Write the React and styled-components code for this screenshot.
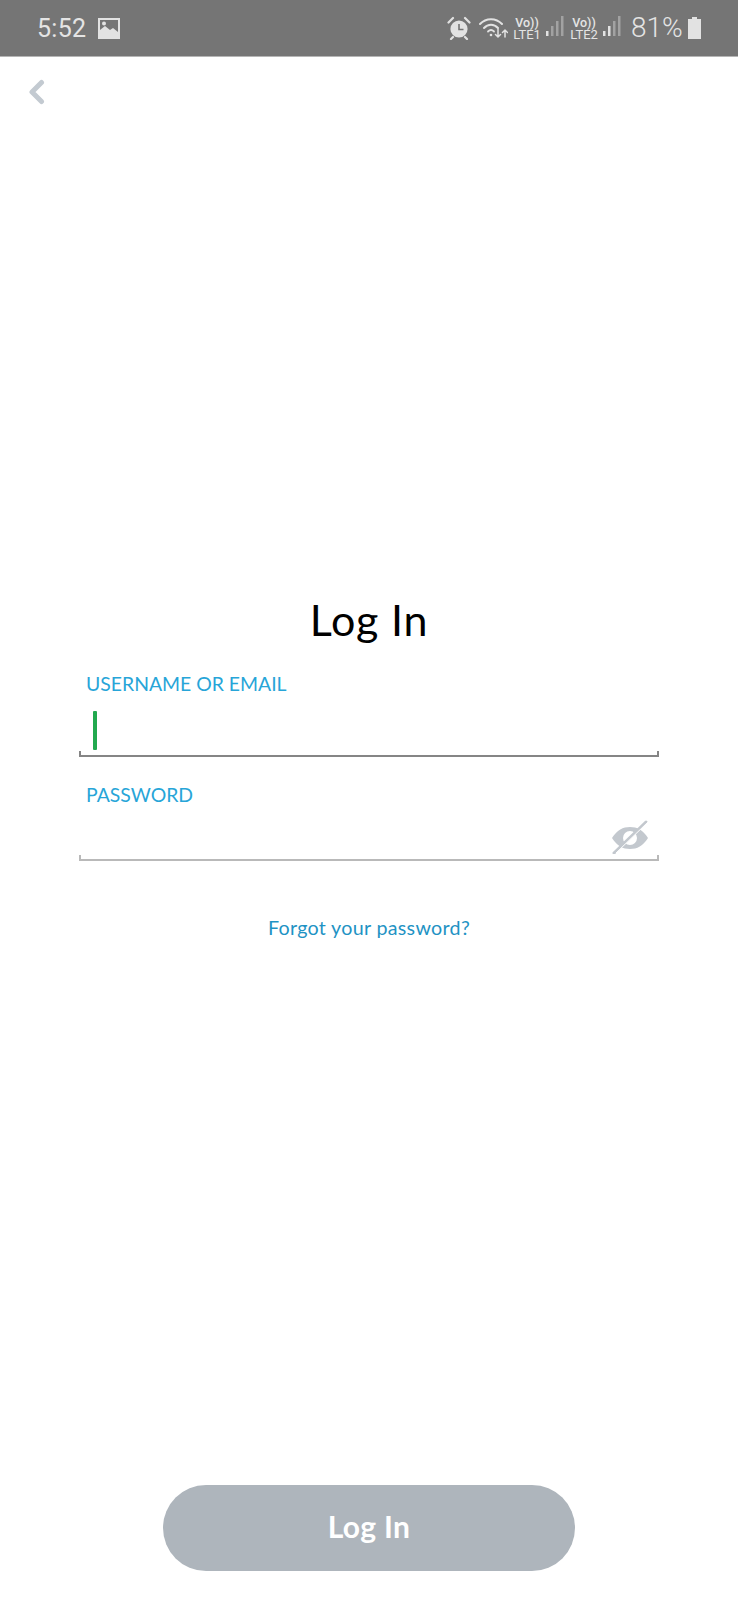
import React from "react";
import styled, { createGlobalStyle } from "styled-components";

const Global = createGlobalStyle`
  html, body { margin: 0; padding: 0; background: #fff; }
  #root { width: 738px; height: 1600px; }
  * { box-sizing: border-box; }
`;

const Page = styled.div`
  width: 738px; height: 1600px; display: flex; flex-direction: column;
  background: #fff; font-family: Lato, "Open Sans", sans-serif; overflow: hidden;
`;
const StatusBar = styled.div`
  height: 57px; flex: none; background: #757575; border-bottom: 1px solid #b5b5b5;
  display: flex; align-items: center; justify-content: space-between;
  padding: 0 36px 0 37px; color: #e4e4e4; font-family: Roboto, sans-serif;
`;
const Side = styled.div`display: flex; align-items: center; gap: ${p => p.$gap || 0}px;`;
const Clock = styled.span`font-size: 25px; line-height: 1; letter-spacing: 0.3px; font-weight: 400;`;
const Percent = styled.span`font-size: 28px; line-height: 1; margin: 0 5px 0 9px; font-weight: 300; width: 51px; white-space: nowrap;`;
const Sim = styled.div`
  display: flex; flex-direction: column; align-items: center; font-size: 13px; line-height: 12px;
  width: 28px; margin: 1px 4px 0 ${p => p.$ml}px;
`;
const SimTop = styled.span`font-size: 12.5px; font-weight: 500;`;
const AlarmWrap = styled.span`display: flex; margin-right: 8px;`;
const TopBar = styled.div`height: 69px; flex: none; padding: 22px 0 0 27px; display: flex; align-items: flex-start;`;
const Form = styled.main`
  flex: 1; display: flex; flex-direction: column; padding: 469px 79px 0;
`;
const Title = styled.h1`
  margin: 0; text-align: center; font-size: 43px; line-height: 50px; font-weight: 400; color: #000;
  letter-spacing: 0.8px;
`;
const Field = styled.div`
  display: flex; flex-direction: column; height: ${p => p.$h}px; margin-top: ${p => p.$mt}px;
`;
const Label = styled.label`
  font-size: 19.4px; line-height: 24px; color: #27a5d8; padding-left: 7px; flex: none;
`;
const InputBox = styled.div`
  flex: 1; position: relative; display: flex; align-items: flex-end; justify-content: flex-end;
  border: 2px solid ${p => p.$active ? "#858585" : "#b9b9b9"}; border-top: 0;
  border-image: linear-gradient(to bottom, transparent 0, transparent calc(100% - 6px), ${p => p.$active ? "#858585" : "#b9b9b9"} calc(100% - 6px)) 2;
`;
const Caret = styled.span`
  position: absolute; left: 12px; bottom: 5px; width: 4px; height: 39px; background: #22a94f; border-radius: 1px;
`;
const EyeWrap = styled.span`display: flex; margin: 0 8px 5px 0;`;
const Forgot = styled.a`
  margin-top: 55px; text-align: center; font-size: 19.7px; line-height: 24px; color: #1f93c4; letter-spacing: 0.3px;
`;
const Footer = styled.div`flex: none; display: flex; justify-content: center; padding-bottom: 29px;`;
const Button = styled.button`
  width: 412px; height: 86px; border: 0; border-radius: 43px; background: #aeb5bc; color: #fff;
  font-family: Lato, sans-serif; font-weight: 700; font-size: 30px; letter-spacing: 0.3px; padding: 0 0 4px;
`;

const Photo = () => (
  <svg width="22" height="21" viewBox="0 0 22 21">
    <path fillRule="evenodd" fill="#e2e2e2" d="M0 0h22v21H0z M2 2v10l5-4 5 4 3-2 5 4V2z" />
    <circle cx="6" cy="5.5" r="2" fill="#e2e2e2" />
  </svg>
);
const Alarm = () => (
  <svg width="24" height="24" viewBox="0 0 24 24">
    <circle cx="12" cy="13" r="8.6" fill="#e2e2e2" />
    <path d="M12 8v5.5h4.5" fill="none" stroke="#757575" strokeWidth="1.6" />
    <path d="M1.5 6.5 6 2M22.500 6.500 18 2M6 21l-2 2M18 21l2 2" stroke="#e2e2e2" strokeWidth="2.200" strokeLinecap="round" />
  </svg>
);
const Wifi = () => (
  <svg width="29" height="24" viewBox="0 0 29 24" fill="none" stroke="#e2e2e2" strokeLinecap="round">
    <path d="M1 8C7 1.500 17 1.500 23 8" strokeWidth="2" />
    <path d="M5 12c4-4.500 10-4.500 14 0" strokeWidth="2" />
    <path d="M9 15.500c2-2 4-2 6 0" strokeWidth="1.800" />
    <circle cx="12" cy="19" r="1.300" fill="#e2e2e2" stroke="none" />
    <path d="M19 13v8m-2.500-2.500 2.500 2.500 2.500-2.500M26 21v-7m-2.500 2.500L26 14l2.500 2.500" strokeWidth="1.500" />
  </svg>
);
const Signal = ({ bars }) => (
  <svg width="20" height="24" viewBox="0 0 20 24">
    {[0, 1, 2, 3].map(i => (
      <rect key={i} x={1 + i * 5} y={20 - (i + 1) * 5 + (i === 3 ? -2 : 0)} width="2.500"
        height={(i + 1) * 5 + (i === 3 ? 2 : 0)} fill={i < bars ? "#e2e2e2" : "#a2a2a2"} />
    ))}
  </svg>
);
const Battery = () => (
  <svg width="15" height="24" viewBox="0 0 15 24">
    <path d="M5 1h5v2h4v20H1V3h4z" fill="#e2e2e2" />
  </svg>
);
const Back = () => (
  <svg width="18" height="26" viewBox="0 0 18 26" fill="none">
    <path d="M14.500 3.500 5 13l9.500 9.500" stroke="#c3cad1" strokeWidth="5" strokeLinecap="round" strokeLinejoin="round" />
  </svg>
);
const EyeOff = () => (
  <svg width="38" height="34" viewBox="0 0 38 34">
    <path fillRule="evenodd" fill="#c3c8ce" d="M1 18C6 10 12 7 19 7s13 3 18 11c-5 8-11 11-18 11S6 26 1 18z M19 11a7 7 0 1 0 0 14 7 7 0 0 0 0-14z" />
    <path d="M3 33 35 2" stroke="#c3c8ce" strokeWidth="3" strokeLinecap="round" />
    <path d="M5 33 37 2" stroke="#fff" strokeWidth="1" />
  </svg>
);

export default function App() {
  return (
    <Page>
      <Global />
      <StatusBar>
        <Side $gap={12}>
          <Clock>5:52</Clock>
          <Photo />
        </Side>
        <Side>
          <AlarmWrap><Alarm /></AlarmWrap>
          <Wifi />
          <Sim $ml={5}><SimTop>Vo))</SimTop><span>LTE1</span></Sim>
          <Signal bars={1} />
          <Sim $ml={5}><SimTop>Vo))</SimTop><span>LTE2</span></Sim>
          <Signal bars={2} />
          <Percent>81%</Percent>
          <Battery />
        </Side>
      </StatusBar>
      <TopBar><Back /></TopBar>
      <Form>
        <Title>Log In</Title>
        <Field $h={85} $mt={27}>
          <Label>USERNAME OR EMAIL</Label>
          <InputBox $active><Caret /></InputBox>
        </Field>
        <Field $h={78} $mt={26}>
          <Label>PASSWORD</Label>
          <InputBox><EyeWrap><EyeOff /></EyeWrap></InputBox>
        </Field>
        <Forgot>Forgot your password?</Forgot>
      </Form>
      <Footer><Button>Log In</Button></Footer>
    </Page>
  );
}
